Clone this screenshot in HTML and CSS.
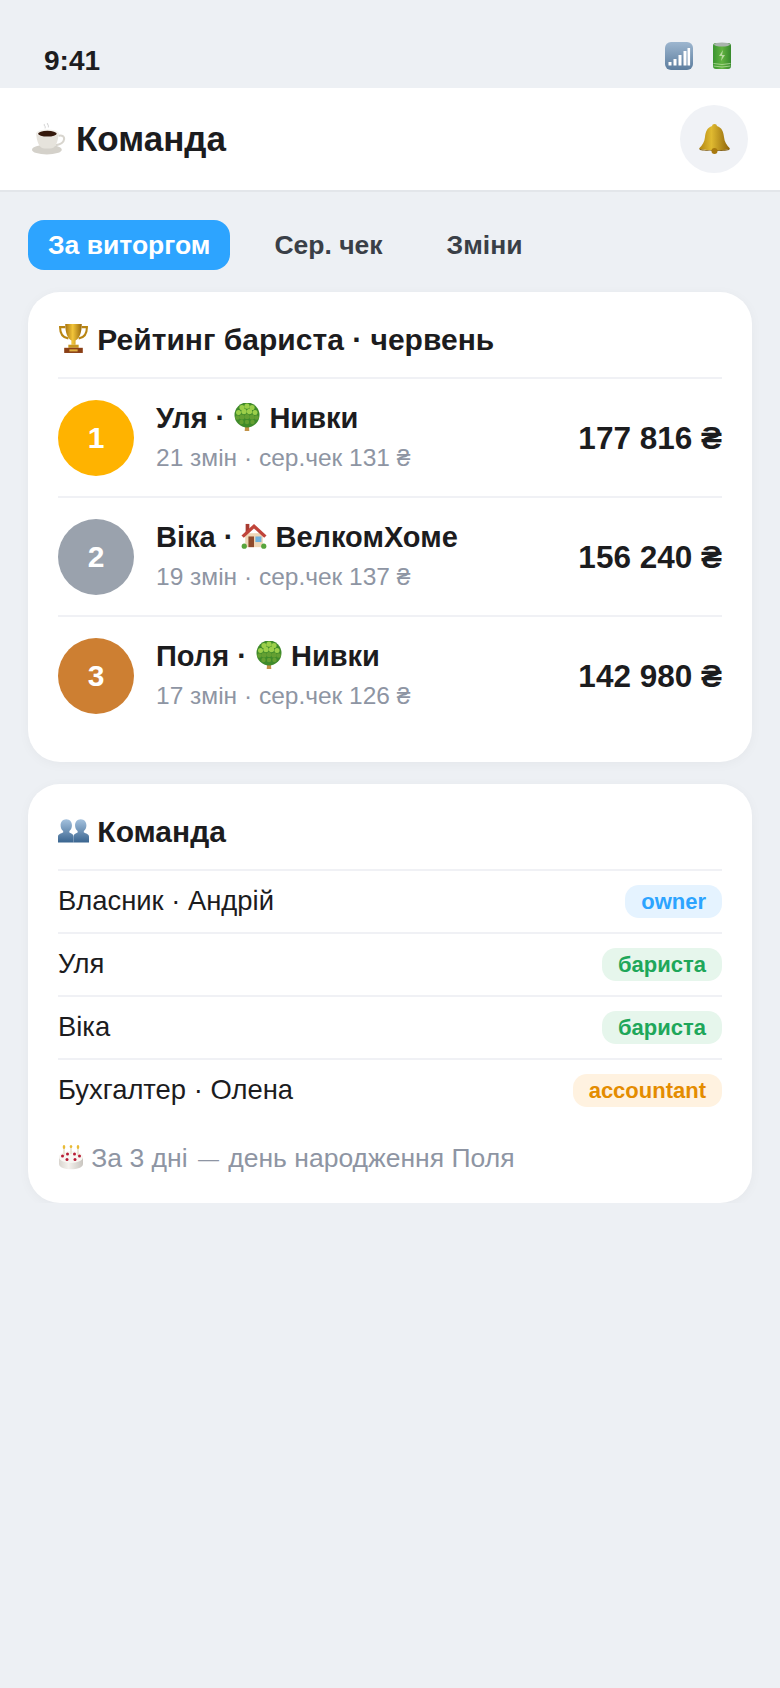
FILE: index.html
```html
<!DOCTYPE html>
<html lang="uk">

<head>
    <meta charset="UTF-8">
    <title>Команда</title>
    <link rel="stylesheet" href="styles.css">
</head>

<body>
    <svg class="defs" width="0" height="0" aria-hidden="true">
        <defs>
            <linearGradient id="gold" x1="0" y1="0" x2="1" y2="0">
                <stop offset="0" stop-color="#a8730f"/>
                <stop offset=".45" stop-color="#f2c53a"/>
                <stop offset="1" stop-color="#9a6a0c"/>
            </linearGradient>
            <linearGradient id="bellGold" x1="0" y1="0" x2="1" y2="0">
                <stop offset="0" stop-color="#b08412"/>
                <stop offset=".4" stop-color="#e0ba30"/>
                <stop offset="1" stop-color="#8c620a"/>
            </linearGradient>
            <linearGradient id="steel" x1="0" y1="0" x2="0" y2="1">
                <stop offset="0" stop-color="#9db6cf"/>
                <stop offset="1" stop-color="#5c7d9e"/>
            </linearGradient>
            <linearGradient id="person" x1="0" y1="0" x2="0" y2="1">
                <stop offset="0" stop-color="#a5c2de"/>
                <stop offset="1" stop-color="#3a6590"/>
            </linearGradient>
            <linearGradient id="cell" x1="0" y1="0" x2="1" y2="0">
                <stop offset="0" stop-color="#3a9430"/>
                <stop offset=".5" stop-color="#62b340"/>
                <stop offset="1" stop-color="#36892c"/>
            </linearGradient>
            <linearGradient id="cakeSide" x1="0" y1="0" x2="1" y2="0">
                <stop offset="0" stop-color="#d9d5cf"/>
                <stop offset=".4" stop-color="#f4f2ee"/>
                <stop offset="1" stop-color="#c9c5bf"/>
            </linearGradient>

            <symbol id="i-coffee" viewBox="0 0 32 30">
                <path d="M12 1c-2 1 2 2 0 4M15 0c-2 1 2 2 0 4" fill="none" stroke="#d9d9d9" stroke-width="1"/>
                <ellipse cx="14" cy="25" rx="14" ry="4.500" fill="#d4d1ca"/>
                <path d="M25 12c7-2 8 7-3 9" fill="none" stroke="#d8d5ce" stroke-width="2"/>
                <path d="M4 9h21c0 8-3 15-8 15h-5C7 24 4 17 4 9z" fill="#e6e3dc"/>
                <ellipse cx="14.500" cy="9.500" rx="10.500" ry="3.500" fill="#f3f1ec"/>
                <ellipse cx="14.500" cy="10" rx="8.800" ry="2.700" fill="#35190c"/>
            </symbol>
            <symbol id="i-bell" viewBox="0 0 31 30">
                <path d="M15.500 0c-1.500 0-2.400.9-2.400 2C8 3.500 6.500 8 6 13c-.5 5-2.500 8-6 11.500 4 2.500 27 2.500 31 0-3.500-3.500-5.500-6.500-6-11.500-.5-5-2-9.500-7.100-11 0-1.100-.9-2-2.400-2z" fill="url(#bellGold)"/>
                <path d="M0 24.500c4 2.500 27 2.500 31 0l-1 1.500c-5 1.500-24 1.500-29 0z" fill="#7f5a0a"/>
                <circle cx="15.500" cy="27" r="3" fill="#a8790f"/>
            </symbol>
            <symbol id="i-signal" viewBox="0 0 28 28">
                <rect width="28" height="28" rx="6" fill="url(#steel)"/>
                <rect x="3.500" y="20" width="3" height="3.500" fill="#fff"/>
                <rect x="8.500" y="17" width="3" height="6.500" fill="#fff"/>
                <rect x="13.500" y="13" width="3" height="10.500" fill="#fff"/>
                <rect x="18.500" y="9" width="3" height="14.500" fill="#fff"/>
                <rect x="22.500" y="6" width="2.600" height="17.500" fill="#fff"/>
            </symbol>
            <symbol id="i-battery" viewBox="0 0 20 28">
                <rect x="1" y="1" width="18" height="26" rx="3" fill="url(#cell)"/>
                <ellipse cx="10" cy="2.500" rx="8" ry="2" fill="#a9b4ac"/>
                <path d="M11 8l-4 6h3l-1 5 4-6h-3z" fill="#b8d9a0"/>
                <path d="M1.500 21.500q8.500 2 17 0M1.500 24q8.500 2 17 0" fill="none" stroke="#b6dc9c" stroke-width=".8"/>
            </symbol>
            <symbol id="i-trophy" viewBox="0 0 30 30">
                <path d="M7 4H2c0 6 2 10 8 11M23 4h5c0 6-2 10-8 11" fill="none" stroke="#b98512" stroke-width="2"/>
                <path d="M7 1h16c0 8-2 14-6 16v4h-4v-4C9 15 7 9 7 1z" fill="url(#gold)"/>
                <rect x="10" y="21" width="10" height="3" fill="#c9971f"/>
                <rect x="6" y="24" width="18" height="5" fill="#8a3f16"/>
                <rect x="11" y="25.500" width="8" height="2" fill="#e0b040"/>
            </symbol>
            <symbol id="i-tree" viewBox="0 0 26 28">
                <path d="M11.500 18h3l.8 10h-4.600z" fill="#c29248"/>
                <circle cx="13" cy="12" r="12.500" fill="#3f8a2a"/>
                <g fill="#9ccf4a">
                    <circle cx="8" cy="4.500" r="2.600"/><circle cx="13" cy="3.200" r="2.600"/><circle cx="18" cy="4.500" r="2.600"/>
                    <circle cx="4.500" cy="9.500" r="2.500"/><circle cx="10" cy="8.500" r="2.700"/><circle cx="15.500" cy="8.500" r="2.700"/><circle cx="21" cy="9.500" r="2.500"/>
                </g>
                <g fill="#649f32">
                    <circle cx="3.500" cy="14.500" r="2.300"/><circle cx="8" cy="14" r="2.600"/><circle cx="13" cy="13.500" r="2.600"/><circle cx="18" cy="14" r="2.600"/><circle cx="22.500" cy="14.500" r="2.300"/>
                    <circle cx="7.500" cy="19" r="2.200"/><circle cx="13" cy="19" r="2.200"/><circle cx="18.500" cy="19" r="2.200"/>
                </g>
            </symbol>
            <symbol id="i-house" viewBox="0 0 28 28">
                <rect x="5" y="1" width="4" height="9" fill="#a83a30"/>
                <rect x="4.500" y="11" width="19" height="15" fill="#efd6b6"/>
                <path d="M14 1L0.500 13.500 3 16 14 6 25 16l2.500-2.500z" fill="#c0443a"/>
                <rect x="8" y="14.500" width="6" height="11.500" fill="#8f4a2b"/>
                <rect x="15.500" y="14.500" width="6.500" height="6" fill="#6fb2de"/>
                <circle cx="3.500" cy="25" r="2.800" fill="#57a53c"/>
                <circle cx="24.500" cy="25" r="2.800" fill="#57a53c"/>
            </symbol>
            <symbol id="i-people" viewBox="0 0 30 24">
                <path d="M8 1c3.500 0 5.500 2.700 5.500 6 0 2.500-1 4.500-2.500 5.500v1.500c2 1 4 1.500 4 4v5.500H0v-5.500c0-2.500 3-3 5-4v-1.500C3.500 11.500 2.500 9.500 2.500 7c0-3.300 2-6 5.500-6z" fill="url(#person)"/>
                <path d="M22 1c3.500 0 5.500 2.700 5.500 6 0 2.500-1 4.500-2.500 5.500v1.500c2 1 5 1.500 5 4v5.500H15v-5.500c0-2.500 2-3 4-4v-1.500C17.500 11.500 16.500 9.500 16.500 7c0-3.300 2-6 5.500-6z" fill="url(#person)"/>
            </symbol>
            <symbol id="i-cake" viewBox="0 0 26 25">
                <path d="M1 12v7c0 7 24 7 24 0v-7z" fill="url(#cakeSide)"/>
                <ellipse cx="13" cy="12" rx="12" ry="6" fill="#f8f6f2"/>
                <path d="M6 3v8M13 2v7M20 3v8" stroke="#e9e2cf" stroke-width="1.600"/>
                <ellipse cx="6" cy="2" rx="1.300" ry="2" fill="#e9bb35"/>
                <ellipse cx="13" cy="1.500" rx="1.300" ry="1.500" fill="#e9bb35"/>
                <ellipse cx="20" cy="2" rx="1.300" ry="2" fill="#e9bb35"/>
                <circle cx="4.500" cy="11" r="1.500" fill="#b81c34"/>
                <circle cx="9.500" cy="9" r="1.500" fill="#b81c34"/>
                <circle cx="16.500" cy="9" r="1.500" fill="#b81c34"/>
                <circle cx="21.500" cy="11" r="1.500" fill="#b81c34"/>
                <circle cx="9" cy="14.500" r="1.500" fill="#b81c34"/>
                <circle cx="17" cy="14.500" r="1.500" fill="#b81c34"/>
            </symbol>
        </defs>
    </svg>

    <div class="status-bar">
        <span class="time">9:41</span>
        <div class="status-icons">
            <svg class="icon-signal"><use href="#i-signal"/></svg>
            <svg class="icon-battery"><use href="#i-battery"/></svg>
        </div>
    </div>

    <header class="top-bar">
        <h1 class="page-title">
            <svg class="icon-title"><use href="#i-coffee"/></svg>
            Команда
        </h1>
        <button class="bell-btn" type="button">
            <svg class="icon-bell"><use href="#i-bell"/></svg>
        </button>
    </header>

    <main class="content">
        <nav class="tabs">
            <span class="tab active">За виторгом</span>
            <span class="tab">Сер. чек</span>
            <span class="tab">Зміни</span>
        </nav>

        <section class="card">
            <h2 class="card-title"><svg class="icon-card"><use href="#i-trophy"/></svg> Рейтинг бариста · червень</h2>

            <div class="rank-row">
                <div class="medal gold">1</div>
                <div class="rank-info">
                    <div class="rank-name">Уля · <svg class="icon-inline"><use href="#i-tree"/></svg> Нивки</div>
                    <div class="rank-sub">21 змін · сер.чек 131 ₴</div>
                </div>
                <div class="rank-sum">177 816 ₴</div>
            </div>
            <div class="rank-row">
                <div class="medal silver">2</div>
                <div class="rank-info">
                    <div class="rank-name">Віка · <svg class="icon-inline icon-house"><use href="#i-house"/></svg> ВелкомХоме</div>
                    <div class="rank-sub">19 змін · сер.чек 137 ₴</div>
                </div>
                <div class="rank-sum">156 240 ₴</div>
            </div>
            <div class="rank-row">
                <div class="medal bronze">3</div>
                <div class="rank-info">
                    <div class="rank-name">Поля · <svg class="icon-inline"><use href="#i-tree"/></svg> Нивки</div>
                    <div class="rank-sub">17 змін · сер.чек 126 ₴</div>
                </div>
                <div class="rank-sum">142 980 ₴</div>
            </div>
        </section>

        <section class="card">
            <h2 class="card-title"><svg class="icon-card"><use href="#i-people"/></svg> Команда</h2>

            <div class="member-row">
                <span class="member-name">Власник · Андрій</span>
                <span class="role owner">owner</span>
            </div>
            <div class="member-row">
                <span class="member-name">Уля</span>
                <span class="role barista">бариста</span>
            </div>
            <div class="member-row">
                <span class="member-name">Віка</span>
                <span class="role barista">бариста</span>
            </div>
            <div class="member-row">
                <span class="member-name">Бухгалтер · Олена</span>
                <span class="role accountant">accountant</span>
            </div>

            <p class="note"><svg class="icon-note"><use href="#i-cake"/></svg> За 3 дні <span class="dash">—</span> день народження Поля</p>
        </section>
    </main>
</body>

</html>
```

FILE: styles.css
```css
* {
    box-sizing: border-box;
}

body {
    background-color: #edf0f4;
    color: #1c1c1e;
    font-family: "Liberation Sans", Arial, Helvetica, sans-serif;
    margin: 0;
    padding: 0;
}

.defs {
    position: absolute;
}

.status-bar {
    height: 88px;
    padding: 0 48px 0 44px;
    display: flex;
    justify-content: space-between;
    align-items: flex-start;
}

.time {
    font-size: 28px;
    font-weight: 700;
    margin-top: 45px;
    line-height: 32px;
}

.status-icons {
    display: flex;
    align-items: center;
    gap: 19px;
    margin-top: 42px;
}

.icon-signal {
    width: 28px;
    height: 28px;
}

.icon-battery {
    width: 20px;
    height: 28px;
}

.top-bar {
    height: 104px;
    background-color: #fff;
    border-bottom: 2px solid #e3e6ea;
    padding: 0 32px;
    display: flex;
    justify-content: space-between;
    align-items: center;
}

.page-title {
    margin: 0;
    font-size: 35px;
    font-weight: 700;
    display: flex;
    align-items: center;
    gap: 10px;
}

.icon-title {
    width: 34px;
    height: 32px;
}

.bell-btn {
    width: 68px;
    height: 68px;
    border: none;
    border-radius: 50%;
    background-color: #f0f2f6;
    display: flex;
    align-items: center;
    justify-content: center;
    padding: 0;
}

.icon-bell {
    width: 31px;
    height: 30px;
}

.content {
    padding: 28px 28px 0;
    display: flex;
    flex-direction: column;
    gap: 22px;
}

.tabs {
    display: flex;
    gap: 24px;
}

.tab {
    padding: 0 20px;
    height: 50px;
    line-height: 50px;
    border-radius: 16px;
    font-size: 26.500px;
    font-weight: 700;
    color: #3a3f47;
}

.tab.active {
    background-color: #2da4ff;
    color: #fff;
}

.card {
    background-color: #fff;
    border-radius: 32px;
    padding: 29px 30px 28px;
    box-shadow: 0 2px 12px rgba(0, 0, 0, 0.04);
}

.card-title {
    margin: 0;
    font-size: 30px;
    line-height: 38px;
    font-weight: 700;
    padding-bottom: 18px;
}

.icon-card {
    width: 31px;
    height: 31px;
    vertical-align: -4px;
}

.rank-row {
    height: 119px;
    border-top: 2px solid #f0f1f5;
    display: flex;
    align-items: center;
    gap: 22px;
}

.medal {
    width: 76px;
    height: 76px;
    border-radius: 50%;
    color: #fff;
    font-size: 30px;
    font-weight: 700;
    display: flex;
    align-items: center;
    justify-content: center;
    flex-shrink: 0;
}

.medal.gold {
    background-color: #ffb300;
}

.medal.silver {
    background-color: #9aa2ad;
}

.medal.bronze {
    background-color: #cd7f32;
}

.rank-info {
    flex: 1;
    margin-bottom: 2px;
}

.rank-name {
    font-size: 29px;
    font-weight: 700;
    line-height: 36px;
}

.icon-inline {
    width: 26px;
    height: 28px;
    margin: 0 1px;
    vertical-align: -3px;
}

.icon-house {
    margin: 0;
}

.rank-sub {
    font-size: 24.500px;
    line-height: 32px;
    color: #8e95a3;
    margin-top: 6px;
}

.rank-sum {
    font-size: 31.500px;
    font-weight: 700;
    margin-top: 2px;
}

.member-row {
    height: 63px;
    border-top: 2px solid #f0f1f5;
    display: flex;
    justify-content: space-between;
    align-items: center;
    font-size: 27.400px;
}

.member-name {
    margin-bottom: 2px;
}

.role {
    font-size: 22px;
    height: 33px;
    line-height: 33px;
    font-weight: 700;
    padding: 0 16px;
    border-radius: 14px;
}

.role.owner {
    background-color: #e5f3ff;
    color: #2da4ff;
}

.role.barista {
    background-color: #e6f6ec;
    color: #1ea75a;
}

.role.accountant {
    background-color: #fff2e0;
    color: #e48c00;
}

.note {
    margin: 20px 0 -1px;
    font-size: 26.500px;
    line-height: 34px;
    color: #8e95a3;
}

.dash {
    font-size: 21px;
    margin: 0 2px 0 3px;
    vertical-align: 1px;
}

.icon-note {
    width: 26px;
    height: 25px;
    vertical-align: -3px;
}
```
